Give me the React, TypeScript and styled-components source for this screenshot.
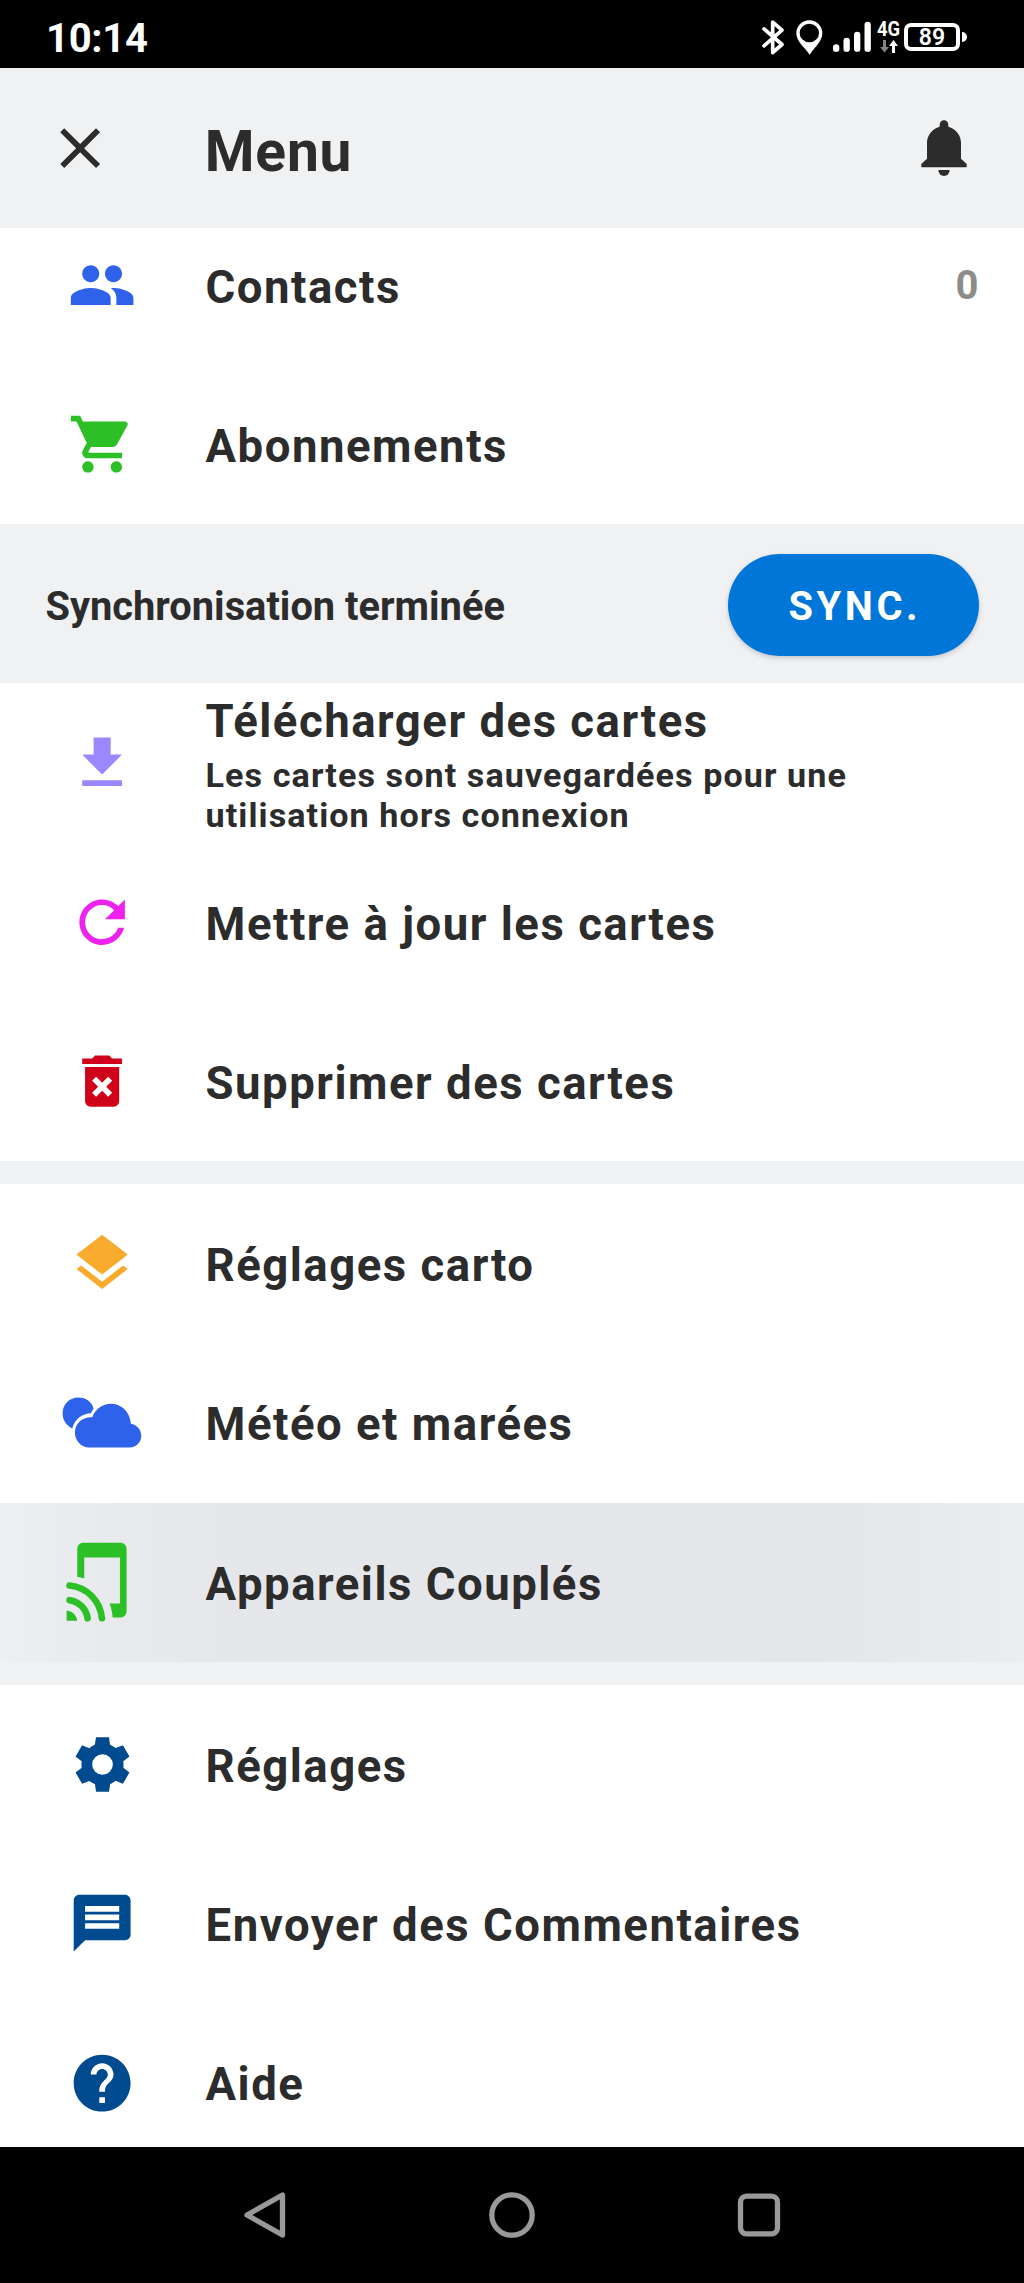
import React from "react";
import styled, { createGlobalStyle, css } from "styled-components";
import {
  MdClose,
  MdPeople,
  MdShoppingCart,
  MdFileDownload,
  MdRefresh,
  MdDeleteForever,
  MdLayers,
  MdMessage,
  MdHelp,
} from "react-icons/md";

const GlobalStyle = createGlobalStyle`
  * { box-sizing: border-box; }
  body {
    margin: 0;
    background: #fff;
    color: #2c2c2c;
    font-family: Roboto, "Liberation Sans", sans-serif;
  }
`;

const Screen = styled.div`
  width: 1024px;
  height: 2283px;
  display: flex;
  flex-direction: column;
  overflow: hidden;
  background: #fff;
`;

const StatusBar = styled.div`
  flex: none;
  height: 68px;
  display: flex;
  align-items: center;
  justify-content: space-between;
  padding: 6px 57px 0 46px;
  background: #000;
  color: #fff;
`;

const Clock = styled.span`
  padding-top: 3px;
  font-size: 40px;
  font-weight: 700;
  line-height: 58px;
  letter-spacing: -0.3px;
`;

const StatusIcons = styled.div`
  display: flex;
  align-items: center;
  svg { display: block; }
`;

const Bluetooth = styled.svg`
  width: 22px;
  height: 35px;
  margin-right: 12px;
`;

const Pin = styled.svg`
  width: 27px;
  height: 35px;
  margin-right: 10px;
`;

const Signal = styled.svg`
  width: 38px;
  height: 32px;
  margin: 0 7px 0 0;
`;

const Network = styled.div`
  width: 22px;
  height: 32px;
  margin-right: 4px;
  display: flex;
  flex-direction: column;
  align-items: center;
  justify-content: space-between;
`;

const NetworkLabel = styled.span`
  font-size: 20px;
  font-weight: 700;
  line-height: 17px;
  transform: scaleX(0.92);
`;

const Battery = styled.div`
  display: flex;
  align-items: center;
`;

const BatteryBody = styled.div`
  width: 56px;
  height: 28px;
  border: 4px solid #fff;
  border-radius: 7px;
  display: flex;
  align-items: center;
  justify-content: center;
  padding-top: 1px;
  font-size: 23px;
  font-weight: 600;
  line-height: 20px;
`;

const BatteryCap = styled.div`
  width: 5px;
  height: 10px;
  margin-left: 2px;
  border-radius: 0 5px 5px 0;
  background: #fff;
`;

const Header = styled.header`
  flex: none;
  height: 159.5px;
  display: flex;
  align-items: center;
  padding: 0 45.5px;
  background: #f0f1f3;
`;

const Title = styled.h1`
  flex: 1;
  margin: 0 0 0 91px;
  padding-top: 8px;
  font-size: 56.9px;
  font-weight: 700;
  line-height: 66px;
  letter-spacing: 0.8px;
`;

const HeaderIcon = styled.div`
  width: 68.27px;
  height: 68.27px;
  display: flex;
  align-items: center;
  justify-content: center;
  svg { display: block; flex: none; }
`;

const List = styled.main`
  flex: none;
  height: 1919px;
  overflow: hidden;
`;

const Group = styled.section<{ $scrolled?: boolean }>`
  ${(p) => p.$scrolled && css`margin-top: -22px;`}
`;

const Row = styled.div<{ $pressed?: boolean }>`
  height: 159.29px;
  display: flex;
  align-items: center;
  padding: 0 45.5px 0 68.27px;
  ${(p) =>
    p.$pressed &&
    css`
      background: linear-gradient(90deg, #eeeff1 0, #e9eaed 10%, #e6e7ea 22%, #e5e6e9 80%, #e8e9eb 90%, #ecedef 100%);
    `}
`;

const IconSlot = styled.div<{ $color: string }>`
  flex: none;
  width: 68.27px;
  height: 68.27px;
  margin-right: 69px;
  display: flex;
  align-items: center;
  justify-content: center;
  color: ${(p) => p.$color};
  svg { display: block; flex: none; }
`;

const Texts = styled.div`
  flex: 1;
  padding-top: 5px;
`;

const Label = styled.div`
  font-size: 45.5px;
  font-weight: 700;
  line-height: 54px;
  letter-spacing: 1.52px;
`;

const Detail = styled.div`
  width: 700px;
  margin-top: 6px;
  font-size: 34.13px;
  font-weight: 700;
  line-height: 40px;
  letter-spacing: 1.07px;
`;

const Count = styled.span`
  font-size: 40px;
  font-weight: 700;
  color: #8c8c8c;
`;

const SyncBar = styled.div`
  height: 159.29px;
  display: flex;
  align-items: center;
  justify-content: space-between;
  padding: 2px 45.5px 0;
  background: #f0f1f3;
`;

const SyncText = styled.span`
  padding-top: 4px;
  font-size: 39.8px;
  font-weight: 700;
`;

const SyncButton = styled.button`
  width: 250.3px;
  height: 102.4px;
  border: 0;
  border-radius: 51.2px;
  padding: 4px 0 0 3px;
  background: #0076d8;
  color: #fff;
  font: 700 39.8px Roboto, "Liberation Sans", sans-serif;
  letter-spacing: 3.6px;
  box-shadow: 0 2px 5px rgba(0, 0, 0, 0.18);
`;

const Gap = styled.div`
  height: 22.76px;
  background: #f0f1f3;
`;

const NavBar = styled.nav`
  flex: 1;
  display: flex;
  align-items: center;
  justify-content: center;
  gap: 200.6px;
  background: #000;
  svg { display: block; width: 46px; height: 46px; }
`;

const BellIcon = () => (
  <svg width="46" height="57" viewBox="844 119 138 171" fill="#2c2c2c" overflow="visible">
    <path d="M900 142v-6a13 13 0 0 1 26 0v6c22 6 38 25 38 49v47l17 16v10H845v-10l17-16v-47c0-24 16-43 38-49z" />
    <path d="M896 272h34a17 18 0 0 1-34 0z" />
  </svg>
);

const CloudsIcon = () => (
  <svg width="100" height="80" viewBox="1.2 -4.5 300 240" fill="currentColor">
    <path d="M62 132C43 121 33 106 33 86c0-27 21-47 48-47 22 0 40 13 45 34-3 4-6 8-8 13-27 1-49 18-56 46z" />
    <path d="M112 189c-23 0-42-20-42-45 0-26 20-46 48-46h4c9-23 30-40 56-40 32 0 57 24 60 60 18 3 31 18 31 36 0 20-15 35-35 35z" />
  </svg>
);

const PairedIcon = () => (
  <svg width="100" height="100" viewBox="1.2 6.4 300 300" fill="currentColor">
    <path d="M77 141V58c0-11 8-19 19-19h110c11 0 19 8 19 19v186c0 11-8 19-19 19h-23c-1-15-4-29-9-42h31V83H98v63c-7-2-14-4-21-5z" />
    <path d="M45 242c17 2 30 14 32 31H45z" />
    <path
      d="M54 211c28 4 50 26 54 54M54 167c52 5 92 46 97 98"
      fill="none"
      stroke="currentColor"
      strokeWidth="20"
      strokeLinecap="round"
    />
  </svg>
);

const gearOutline = (() => {
  const turn = (x: number, y: number, i: number) => {
    const a = (i * Math.PI) / 3;
    const px = x * Math.cos(a) - y * Math.sin(a);
    const py = x * Math.sin(a) + y * Math.cos(a);
    return `${px.toFixed(2)} ${py.toFixed(2)}`;
  };
  let d = "";
  for (let i = 0; i < 6; i++) {
    d += `${i ? "L" : "M"}${turn(-19.5, -82, i)}L${turn(19.5, -82, i)}L${turn(22.5, -59, i)}`;
    d += `Q${turn(31, -55.5, i)} ${turn(39.6, -49.4, i)}`;
  }
  return d + "ZM31 0A31 31 0 1 0 -31 0A31 31 0 1 0 31 0Z";
})();

const GearIcon = () => (
  <svg width="57" height="57" viewBox="-85.5 -85.5 171 171" fill="currentColor" fillRule="evenodd">
    <path d={gearOutline} />
  </svg>
);

const ICON = 68.27;

interface ItemProps {
  icon: React.ReactNode;
  color: string;
  label: string;
  detail?: string;
  count?: number;
  pressed?: boolean;
}

const Item = ({ icon, color, label, detail, count, pressed }: ItemProps) => (
  <Row $pressed={pressed}>
    <IconSlot $color={color}>{icon}</IconSlot>
    <Texts>
      <Label>{label}</Label>
      {detail && <Detail>{detail}</Detail>}
    </Texts>
    {count !== undefined && <Count>{count}</Count>}
  </Row>
);

export default function App() {
  return (
    <Screen>
      <GlobalStyle />
      <StatusBar>
        <Clock>10:14</Clock>
        <StatusIcons>
          <Bluetooth viewBox="64 59 66 104" fill="none" stroke="#fff" strokeWidth="11" strokeLinejoin="round" strokeLinecap="round">
            <path d="M70 85l54 47-28 24V65l28 24-54 47" />
          </Bluetooth>
          <Pin viewBox="167 58 81 105" fill="#fff" fillRule="evenodd">
            <path d="M207 59c22 0 39 17 39 39 0 24-22 40-38 64-17-24-40-40-40-64 0-22 17-39 39-39zM207 69a29 28 0 1 0 0 56a29 28 0 1 0 0-56z" />
          </Pin>
          <Signal viewBox="279 66 114 96" stroke="#fff" strokeWidth="19" strokeLinecap="round">
            <path d="M288.500 145v4M320 126v23M351.500 108v41M383 78v71" />
          </Signal>
          <Network>
            <NetworkLabel>4G</NetworkLabel>
            <svg width="18" height="13" viewBox="0 0 18 13">
              <path d="M3 0h3v7h3l-4.500 5.500L0 7h3z" fill="#858585" />
              <path d="M12 13h3V6h3L13.500 0 9 6h3z" fill="#fff" />
            </svg>
          </Network>
          <Battery>
            <BatteryBody>89</BatteryBody>
            <BatteryCap />
          </Battery>
        </StatusIcons>
      </StatusBar>

      <Header>
        <HeaderIcon>
          <MdClose size={ICON} />
        </HeaderIcon>
        <Title>Menu</Title>
        <HeaderIcon>
          <BellIcon />
        </HeaderIcon>
      </Header>

      <List>
        <Group $scrolled>
          <Item icon={<MdPeople size={ICON} />} color="#2f62ea" label="Contacts" count={0} />
          <Item icon={<MdShoppingCart size={ICON} />} color="#2dc026" label="Abonnements" />
        </Group>
        <SyncBar>
          <SyncText>Synchronisation terminée</SyncText>
          <SyncButton>SYNC.</SyncButton>
        </SyncBar>
        <Group>
          <Item
            icon={<MdFileDownload size={ICON} />}
            color="#9b88ff"
            label="Télécharger des cartes"
            detail="Les cartes sont sauvegardées pour une utilisation hors connexion"
          />
          <Item icon={<MdRefresh size={ICON} />} color="#ee22ee" label="Mettre à jour les cartes" />
          <Item icon={<MdDeleteForever size={ICON} />} color="#d0021b" label="Supprimer des cartes" />
        </Group>
        <Gap />
        <Group>
          <Item icon={<MdLayers size={ICON} />} color="#f9ab2d" label="Réglages carto" />
          <Item icon={<CloudsIcon />} color="#2f62ea" label="Météo et marées" />
          <Item icon={<PairedIcon />} color="#2dc026" label="Appareils Couplés" pressed />
        </Group>
        <Gap />
        <Group>
          <Item icon={<GearIcon />} color="#004b8f" label="Réglages" />
          <Item icon={<MdMessage size={ICON} />} color="#004b8f" label="Envoyer des Commentaires" />
          <Item icon={<MdHelp size={ICON} />} color="#004b8f" label="Aide" />
        </Group>
      </List>

      <NavBar>
        <svg viewBox="0 0 46 46" fill="none" stroke="#999" strokeWidth="5.300" strokeLinejoin="round">
          <path d="M40.500 3v40L5 23z" />
        </svg>
        <svg viewBox="0 0 46 46" fill="none" stroke="#999" strokeWidth="5.300">
          <circle cx="23" cy="23" r="20.200" />
        </svg>
        <svg viewBox="0 0 46 46" fill="none" stroke="#999" strokeWidth="5.300">
          <rect x="4.500" y="4.200" width="37" height="37.600" rx="6" />
        </svg>
      </NavBar>
    </Screen>
  );
}
